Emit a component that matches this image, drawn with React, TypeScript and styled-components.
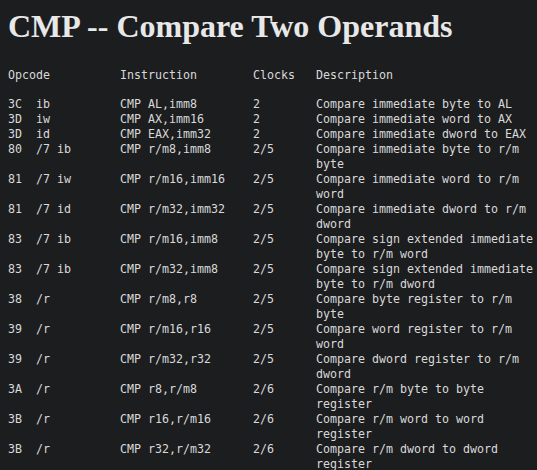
import React from "react";
import styled, { createGlobalStyle } from "styled-components";

const GlobalStyle = createGlobalStyle`
  html, body {
    margin: 0;
    padding: 0;
    background: #1c1d1f;
  }
  body {
    padding: 8px;
  }
`;

const Page = styled.div`
  color: #d9d9d9;
`;

const Title = styled.h1`
  font-family: "Liberation Serif", "Times New Roman", serif;
  font-weight: bold;
  font-size: 32px;
  line-height: 37px;
  color: #e8e8e8;
  margin: 0 0 23px 0;
`;

const Table = styled.div`
  font-family: "DejaVu Sans Mono", "Liberation Mono", monospace;
  font-size: 11.63px;
  line-height: 15px;
`;

const Row = styled.div<{ $head?: boolean }>`
  display: grid;
  grid-template-columns: 112px 133px 63px 220px;
  margin-bottom: ${(p) => (p.$head ? "14px" : "0")};
`;

const Cell = styled.div`
  white-space: pre;
`;

const Desc = styled.div`
  white-space: normal;
`;

type Op = [string, string, string, string];

const ops: Op[] = [
  ["3C  ib", "CMP AL,imm8", "2", "Compare immediate byte to AL"],
  ["3D  iw", "CMP AX,imm16", "2", "Compare immediate word to AX"],
  ["3D  id", "CMP EAX,imm32", "2", "Compare immediate dword to EAX"],
  ["80  /7 ib", "CMP r/m8,imm8", "2/5", "Compare immediate byte to r/m byte"],
  ["81  /7 iw", "CMP r/m16,imm16", "2/5", "Compare immediate word to r/m word"],
  ["81  /7 id", "CMP r/m32,imm32", "2/5", "Compare immediate dword to r/m dword"],
  ["83  /7 ib", "CMP r/m16,imm8", "2/5", "Compare sign extended immediate byte to r/m word"],
  ["83  /7 ib", "CMP r/m32,imm8", "2/5", "Compare sign extended immediate byte to r/m dword"],
  ["38  /r", "CMP r/m8,r8", "2/5", "Compare byte register to r/m byte"],
  ["39  /r", "CMP r/m16,r16", "2/5", "Compare word register to r/m word"],
  ["39  /r", "CMP r/m32,r32", "2/5", "Compare dword register to r/m dword"],
  ["3A  /r", "CMP r8,r/m8", "2/6", "Compare r/m byte to byte register"],
  ["3B  /r", "CMP r16,r/m16", "2/6", "Compare r/m word to word register"],
  ["3B  /r", "CMP r32,r/m32", "2/6", "Compare r/m dword to dword register"],
];

export default function App() {
  return (
    <Page>
      <GlobalStyle />
      <Title>CMP -- Compare Two Operands</Title>
      <Table>
        <Row $head>
          <Cell>Opcode</Cell>
          <Cell>Instruction</Cell>
          <Cell>Clocks</Cell>
          <Desc>Description</Desc>
        </Row>
        {ops.map((op, i) => (
          <Row key={i}>
            <Cell>{op[0]}</Cell>
            <Cell>{op[1]}</Cell>
            <Cell>{op[2]}</Cell>
            <Desc>{op[3]}</Desc>
          </Row>
        ))}
      </Table>
    </Page>
  );
}
